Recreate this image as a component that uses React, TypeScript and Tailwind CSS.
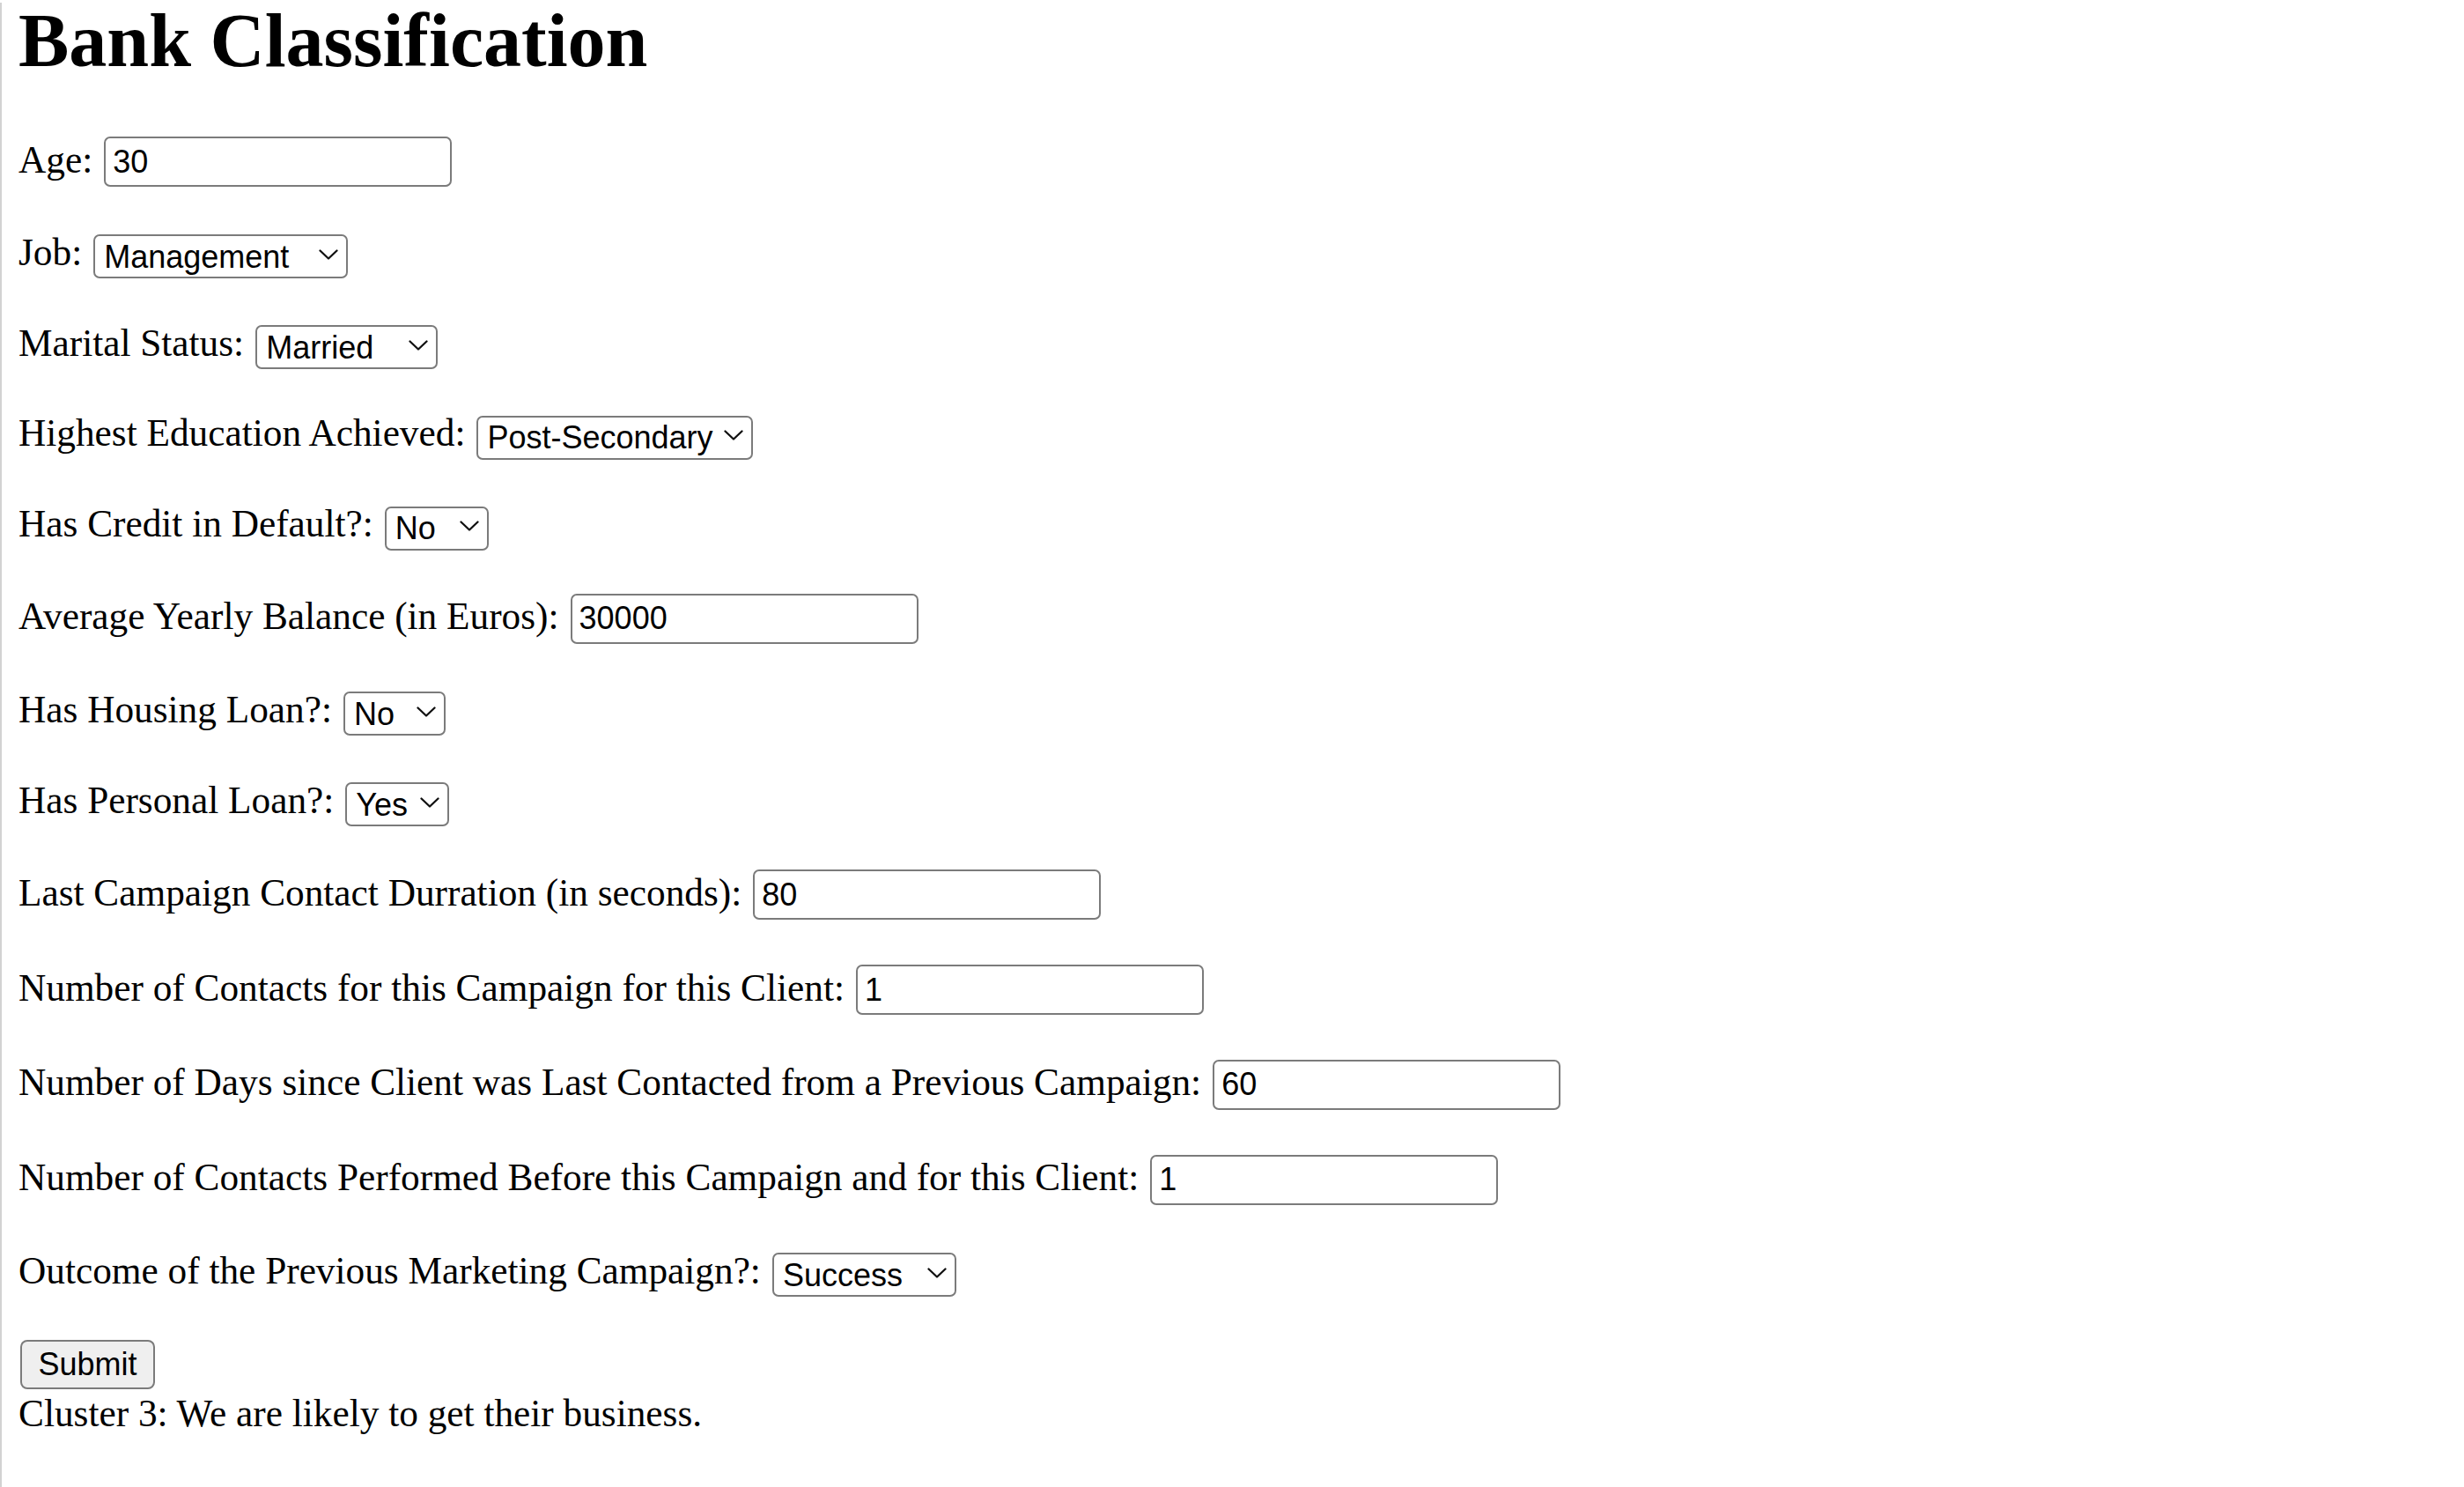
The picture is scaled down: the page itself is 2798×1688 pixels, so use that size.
type Field =
  | { kind: "input"; label: string; value: string }
  | {
      kind: "select";
      label: string;
      value: string;
      options: string[];
      width: string;
    };

const fields: Field[] = [
  { kind: "input", label: "Age:", value: "30" },
  {
    kind: "select",
    label: "Job:",
    value: "Management",
    options: ["Admin", "Blue-Collar", "Entrepreneur", "Management", "Retired", "Services", "Student", "Technician"],
    width: "w-[289px]",
  },
  {
    kind: "select",
    label: "Marital Status:",
    value: "Married",
    options: ["Single", "Married", "Divorced"],
    width: "w-[207px]",
  },
  {
    kind: "select",
    label: "Highest Education Achieved:",
    value: "Post-Secondary",
    options: ["Primary", "Secondary", "Post-Secondary"],
    width: "w-[314px]",
  },
  {
    kind: "select",
    label: "Has Credit in Default?:",
    value: "No",
    options: ["Yes", "No"],
    width: "w-[118px]",
  },
  { kind: "input", label: "Average Yearly Balance (in Euros):", value: "30000" },
  {
    kind: "select",
    label: "Has Housing Loan?:",
    value: "No",
    options: ["Yes", "No"],
    width: "w-[116px]",
  },
  {
    kind: "select",
    label: "Has Personal Loan?:",
    value: "Yes",
    options: ["Yes", "No"],
    width: "w-[118px]",
  },
  { kind: "input", label: "Last Campaign Contact Durration (in seconds):", value: "80" },
  { kind: "input", label: "Number of Contacts for this Campaign for this Client:", value: "1" },
  {
    kind: "input",
    label: "Number of Days since Client was Last Contacted from a Previous Campaign:",
    value: "60",
  },
  {
    kind: "input",
    label: "Number of Contacts Performed Before this Campaign and for this Client:",
    value: "1",
  },
  {
    kind: "select",
    label: "Outcome of the Previous Marketing Campaign?:",
    value: "Success",
    options: ["Failure", "Other", "Success", "Unknown"],
    width: "w-[209px]",
  },
];

function Chevron() {
  return (
    <svg
      width="22"
      height="13"
      viewBox="0 0 22 13"
      fill="none"
      className="pointer-events-none absolute right-[11px] top-1/2 -translate-y-1/2"
    >
      <path d="M1.5 2 L11 11 L20.5 2" stroke="#111" strokeWidth="2.3" strokeLinecap="round" strokeLinejoin="round" />
    </svg>
  );
}

function Row({ field }: { field: Field }) {
  if (field.kind === "input") {
    return (
      <div className="flex h-[57px] items-center">
        <label className="whitespace-pre pb-[6px]">{field.label}</label>
        <input
          type="text"
          defaultValue={field.value}
          className="ml-[13px] h-[57px] w-[395px] rounded-[7px] border-2 border-[#7b7b7b] bg-white px-[8px] font-['Liberation_Sans',Arial,sans-serif] text-[36px] leading-[normal] text-black outline-none"
        />
      </div>
    );
  }

  return (
    <div className="flex h-[52px] items-center">
      <label className="whitespace-pre pb-[6px]">{field.label}</label>
      <div className={`relative ml-[13px] h-[50px] ${field.width}`}>
        <select
          defaultValue={field.value}
          className="h-full w-full appearance-none rounded-[7px] border-2 border-[#7b7b7b] bg-white pl-[10px] font-['Liberation_Sans',Arial,sans-serif] text-[36px] leading-[normal] text-black outline-none"
        >
          {field.options.map((opt) => (
            <option key={opt} value={opt}>
              {opt}
            </option>
          ))}
        </select>
        <Chevron />
      </div>
    </div>
  );
}

export default function App() {
  return (
    <div className="min-h-screen border-l-2 border-[#d2d2d2] bg-white pl-[19px] font-['Liberation_Serif','Times_New_Roman',serif] text-[43.3px] leading-[normal] text-black">
      <h1 className="mt-[3px] text-[86px] font-bold leading-[86px]">Bank Classification</h1>

      <form className="mt-[66px] flex flex-col gap-[50.8px]" onSubmit={(e) => e.preventDefault()}>
        {fields.map((field) => (
          <Row key={field.label} field={field} />
        ))}

        {/* submit + result */}
        <div>
          <div className="flex h-[56px] items-center">
            <button
              type="submit"
              className="ml-[2px] h-[56px] w-[153px] rounded-[8px] border-2 border-[#7b7b7b] bg-[#efefef] font-['Liberation_Sans',Arial,sans-serif] text-[36px] leading-[normal] text-black"
            >
              Submit
            </button>
          </div>
          <p className="pt-[2px]">Cluster 3: We are likely to get their business.</p>
        </div>
      </form>
    </div>
  );
}
